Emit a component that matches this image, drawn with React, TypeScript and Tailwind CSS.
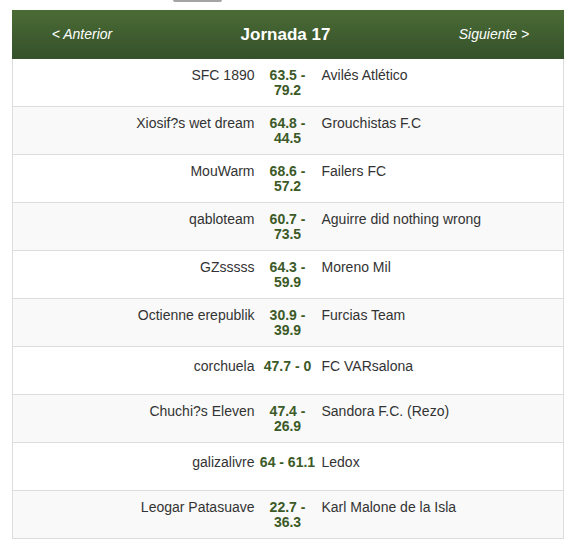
const matches = [
  { home: 'SFC 1890', score: '63.5 - 79.2', away: 'Avilés Atlético' },
  { home: 'Xiosif?s wet dream', score: '64.8 - 44.5', away: 'Grouchistas F.C' },
  { home: 'MouWarm', score: '68.6 - 57.2', away: 'Failers FC' },
  { home: 'qabloteam', score: '60.7 - 73.5', away: 'Aguirre did nothing wrong' },
  { home: 'GZsssss', score: '64.3 - 59.9', away: 'Moreno Mil' },
  { home: 'Octienne erepublik', score: '30.9 - 39.9', away: 'Furcias Team' },
  { home: 'corchuela', score: '47.7 - 0', away: 'FC VARsalona' },
  { home: 'Chuchi?s Eleven', score: '47.4 - 26.9', away: 'Sandora F.C. (Rezo)' },
  { home: 'galizalivre', score: '64 - 61.1', away: 'Ledox' },
  { home: 'Leogar Patasuave', score: '22.7 - 36.3', away: 'Karl Malone de la Isla' },
];

export default function App() {
  return (
    <div className="w-[569px] h-[548px] bg-white font-['Liberation_Sans',Arial,sans-serif] text-[14px] text-[#333]">
      {/* bottom edge of the tab above */}
      <div className="h-[10px]">
        <div className="ml-[173px] w-[49px] h-[2px] bg-[#a4a4a4] rounded-b-[2px]" />
      </div>

      <div className="ml-[12px] w-[552px]">
        {/* Header */}
        <div className="grid grid-cols-[1fr_2fr_1fr] items-center h-[49px] bg-linear-to-b from-[#4b6b35] to-[#34512a] text-white">
          <span className="text-center italic pl-[2px]">&lt; Anterior</span>
          <span className="text-center font-bold text-[17px] pr-[5px]">Jornada 17</span>
          <span className="text-center italic pr-[2px]">Siguiente &gt;</span>
        </div>

        {/* Matches */}
        <div className="border-x border-[#ddd]">
          {matches.map((m, i) => {
            const wraps = m.score.length > 9;
            return (
              <div
                key={i}
                className={`flex items-start h-[48px] border-b border-[#ddd] leading-[15px] ${wraps ? 'pt-[9px]' : 'pt-[12px]'} ${i % 2 === 1 ? 'bg-[#f9f9f9]' : 'bg-white'}`}
              >
                <div className="flex-1 text-right pr-[5px]">{m.home}</div>
                <div className="w-[56px] text-center font-bold text-[#3c5a27]">{m.score}</div>
                <div className="flex-1 pl-[6px]">{m.away}</div>
              </div>
            );
          })}
        </div>
      </div>
    </div>
  );
}
